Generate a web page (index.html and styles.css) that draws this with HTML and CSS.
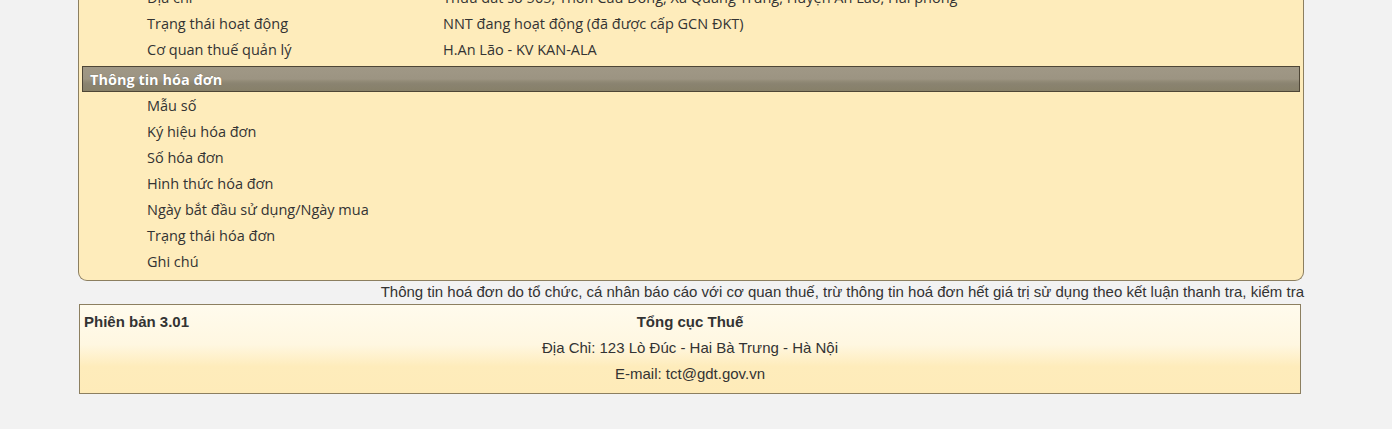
FILE: index.html
```html
<!DOCTYPE html>
<html lang="vi">
<head>
    <meta charset="UTF-8">
    <meta name="viewport" content="width=device-width, initial-scale=1.0">
    <title>Tra cứu hóa đơn</title>
    <link rel="stylesheet" href="styles.css">
</head>
<body>
    <div class="page">
        <div class="panel">
            <div class="row"><span class="label">Địa chỉ</span><span class="value">Thửa đất số 505, Thôn Cầu Đông, Xã Quang Trung, Huyện An Lão, Hải phòng</span></div>
            <div class="row"><span class="label">Trạng thái hoạt động</span><span class="value">NNT đang hoạt động (đã được cấp GCN ĐKT)</span></div>
            <div class="row"><span class="label">Cơ quan thuế quản lý</span><span class="value">H.An Lão - KV KAN-ALA</span></div>

            <div class="section-title">Thông tin hóa đơn</div>
            <div class="row"><span class="label">Mẫu số</span><span class="value"></span></div>
            <div class="row"><span class="label">Ký hiệu hóa đơn</span><span class="value"></span></div>
            <div class="row"><span class="label">Số hóa đơn</span><span class="value"></span></div>
            <div class="row"><span class="label">Hình thức hóa đơn</span><span class="value"></span></div>
            <div class="row"><span class="label">Ngày bắt đầu sử dụng/Ngày mua</span><span class="value"></span></div>
            <div class="row"><span class="label">Trạng thái hóa đơn</span><span class="value"></span></div>
            <div class="row"><span class="label">Ghi chú</span><span class="value"></span></div>
        </div>
        <p class="note">Thông tin hoá đơn do tổ chức, cá nhân báo cáo với cơ quan thuế, trừ thông tin hoá đơn hết giá trị sử dụng theo kết luận thanh tra, kiểm tra</p>

        <div class="footer">
            <span class="version">Phiên bản 3.01</span>
            <p class="org">Tổng cục Thuế</p>
            <p>Địa Chỉ: 123 Lò Đúc - Hai Bà Trưng - Hà Nội</p>
            <p>E-mail: tct@gdt.gov.vn</p>
        </div>
    </div>
</body>
</html>
```
FILE: styles.css
```css
body {
    margin: 0;
    background: #f2f2f2;
    color: #333;
    font-family: "Open Sans", "Noto Sans", sans-serif;
    font-size: 14.5px;
}
.page {
    width: 1226px;
    margin: -16px 0 0 78px;
}
.panel {
    background: #feecbb;
    border: 1px solid #8c7f60;
    border-top: none;
    border-radius: 0 0 9px 9px;
    padding: 0 3px 6px 3px;
}
.row {
    display: flex;
    height: 26px;
    align-items: center;
}
.label {
    width: 296px;
    padding-left: 65px;
    flex-shrink: 0;
}
.section-title {
    margin-top: 4px;
    height: 24px;
    line-height: 26px;
    border: 1px solid #4e4636;
    background: linear-gradient(to bottom, #a09886 0%, #9c9482 50%, #918a76 60%, #8a8370 70%, #878069 100%);
    color: #fff;
    font-weight: bold;
    font-size: 14.5px;
    padding-left: 7px;
    text-shadow: 0 0 1px rgba(0, 0, 0, 0.4);
}
.note {
    margin: 0;
    height: 23px;
    line-height: 22px;
    text-align: right;
    font-family: "Liberation Sans", Arial, sans-serif;
    font-size: 15px;
}
.footer {
    position: relative;
    width: 1220px;
    margin-left: 1px;
    border: 1px solid #8c7f60;
    background: linear-gradient(to bottom, #fffbed 0%, #fff7e1 45%, #feecbb 70%, #feebb9 100%);
    font-family: "Liberation Sans", Arial, sans-serif;
    font-size: 15px;
    text-align: center;
    padding: 4px 0 6px;
}
.footer p {
    margin: 0;
    height: 26px;
    line-height: 26px;
}
.footer .org {
    font-weight: bold;
}
.version {
    position: absolute;
    left: 4px;
    top: 4px;
    line-height: 26px;
    font-weight: bold;
}
```
